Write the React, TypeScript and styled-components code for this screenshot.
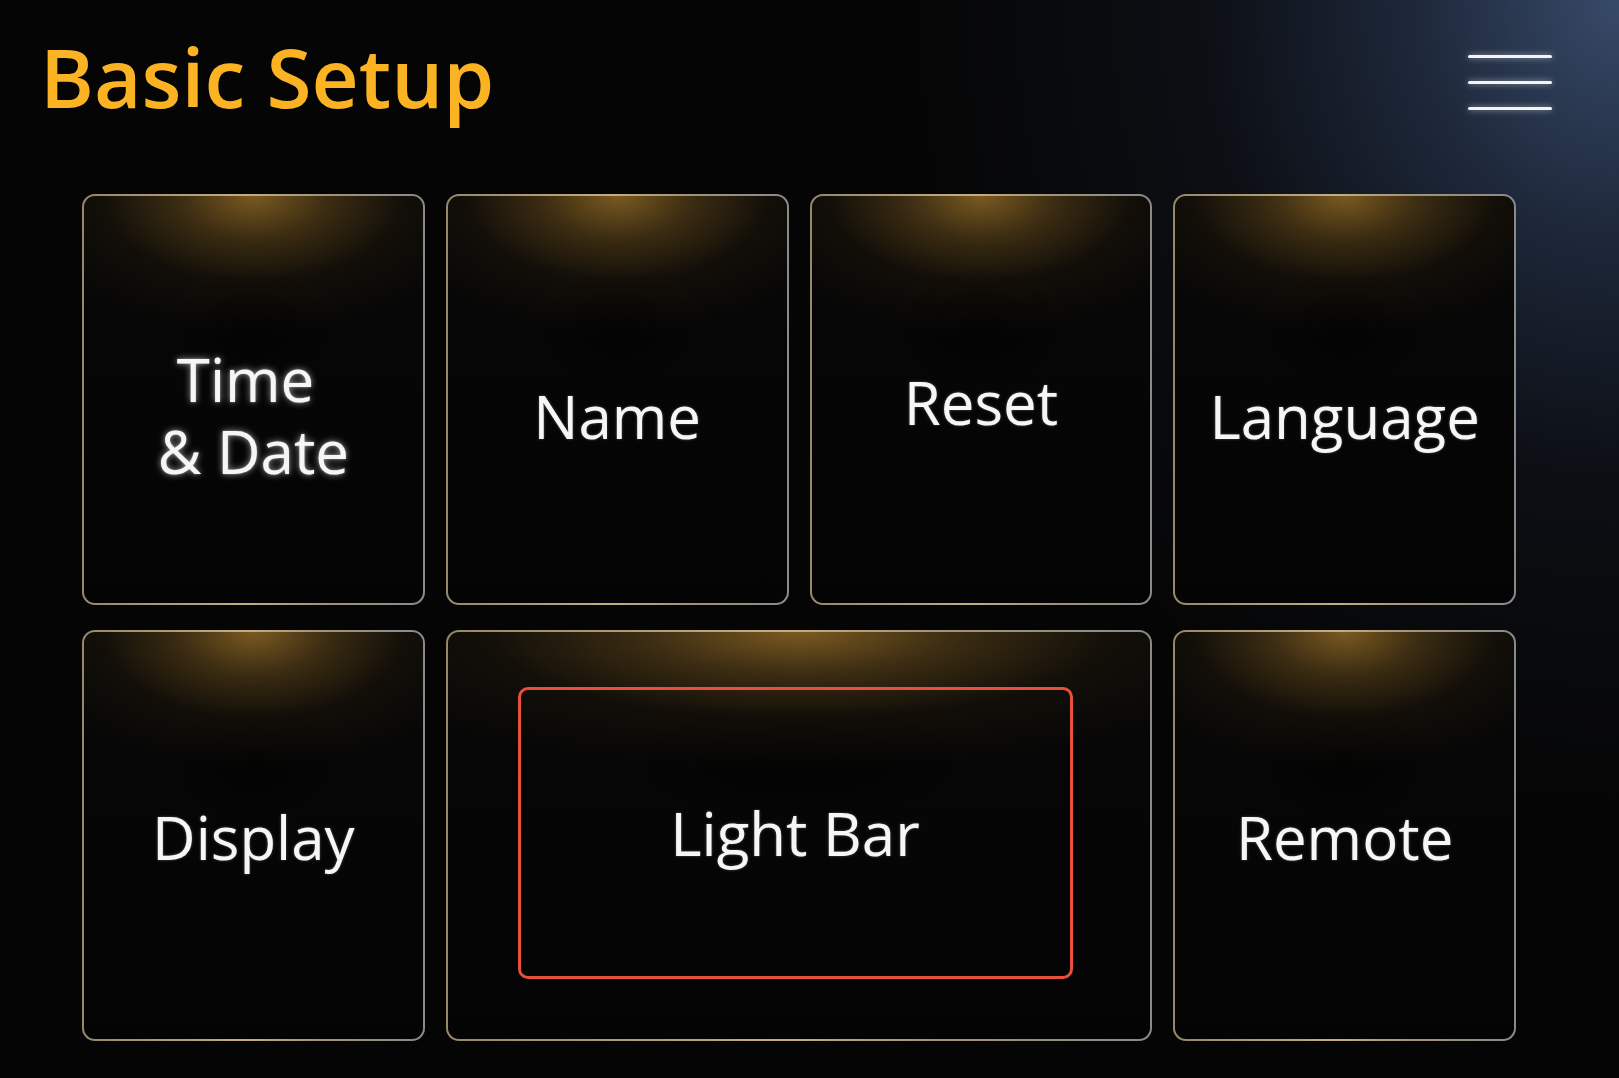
import styled, { createGlobalStyle } from "styled-components";

const GlobalStyle = createGlobalStyle`
    html, body {
        margin: 0;
        padding: 0;
        background: #050505;
    }
    #root {
        min-height: 100vh;
    }
`;

const Page = styled.div`
    box-sizing: border-box;
    width: 1619px;
    height: 1078px;
    overflow: hidden;
    padding: 20px 67px 0 40px;
    font-family: "Open Sans", "Noto Sans", sans-serif;
    background:
        radial-gradient(ellipse 720px 820px at 100% 0%, rgba(58, 78, 110, 0.95) 0%, rgba(38, 52, 76, 0.75) 28%, rgba(20, 26, 38, 0.45) 58%, transparent 100%),
        #050505;
`;

const Header = styled.header`
    display: flex;
    justify-content: space-between;
    align-items: flex-start;
`;

const Title = styled.h1`
    margin: 0;
    font-size: 82px;
    font-weight: 600;
    line-height: normal;
    color: #fbb323;
`;

const MenuButton = styled.div`
    display: flex;
    flex-direction: column;
    gap: 23px;
    margin-top: 35px;
    width: 84px;
    cursor: pointer;
`;

const MenuLine = styled.span`
    display: block;
    height: 3px;
    border-radius: 2px;
    background: #f4f4f4;
    box-shadow: 0 0 6px rgba(255, 255, 255, 0.55);
`;

const Grid = styled.div`
    display: grid;
    grid-template-columns: repeat(4, 1fr);
    grid-template-rows: 411px 411px;
    column-gap: 21px;
    row-gap: 25px;
    margin: 62px 36px 0 42px;
`;

const Card = styled.div<{ $span?: number; $offset?: number; $glow?: boolean }>`
    grid-column: span ${(p) => p.$span ?? 1};
    box-sizing: border-box;
    display: flex;
    align-items: center;
    justify-content: center;
    padding-top: ${(p) => p.$offset ?? 0}px;
    border: 2px solid transparent;
    border-radius: 13px;
    background:
        radial-gradient(ellipse 72% 34% at 50% 0%, rgba(128, 94, 34, 0.95) 0%, rgba(96, 70, 26, 0.6) 30%, rgba(48, 36, 14, 0.28) 62%, transparent 100%) padding-box,
        radial-gradient(ellipse 26% 16% at 50% 32%, rgba(0, 0, 0, 0.55), transparent) padding-box,
        linear-gradient(#070707, #040404) padding-box,
        linear-gradient(90deg, #978868 0%, #c4ad80 48%, #a09478 70%, #8a8a8a 100%) border-box;
    color: #f6f6f6;
    font-size: 60px;
    font-weight: 400;
    line-height: 72px;
    text-align: center;
    text-shadow: ${(p) =>
        p.$glow
            ? "0 0 7px rgba(255, 255, 255, 0.6), 0 0 2px rgba(255, 255, 255, 0.45)"
            : "0 0 3px rgba(255, 255, 255, 0.3)"};
`;

const Focus = styled.div`
    box-sizing: border-box;
    width: 555px;
    height: 292px;
    margin: 0 8px 5px 0;
    display: flex;
    align-items: center;
    justify-content: center;
    border: 3px solid #e8503b;
    border-radius: 10px;
`;

export default function App() {
    return (
        <>
            <GlobalStyle />
            <Page>
                <Header>
                    <Title>Basic Setup</Title>
                    <MenuButton>
                        <MenuLine />
                        <MenuLine />
                        <MenuLine />
                    </MenuButton>
                </Header>
                <Grid>
                    <Card $offset={30} $glow>
                        Time{"\u00a0"}
                        <br />& Date
                    </Card>
                    <Card $offset={32}>Name</Card>
                    <Card $offset={4}>Reset</Card>
                    <Card $offset={32}>Language</Card>
                    <Card $offset={2}>Display</Card>
                    <Card $span={2}>
                        <Focus>Light Bar</Focus>
                    </Card>
                    <Card $offset={2}>Remote</Card>
                </Grid>
            </Page>
        </>
    );
}
